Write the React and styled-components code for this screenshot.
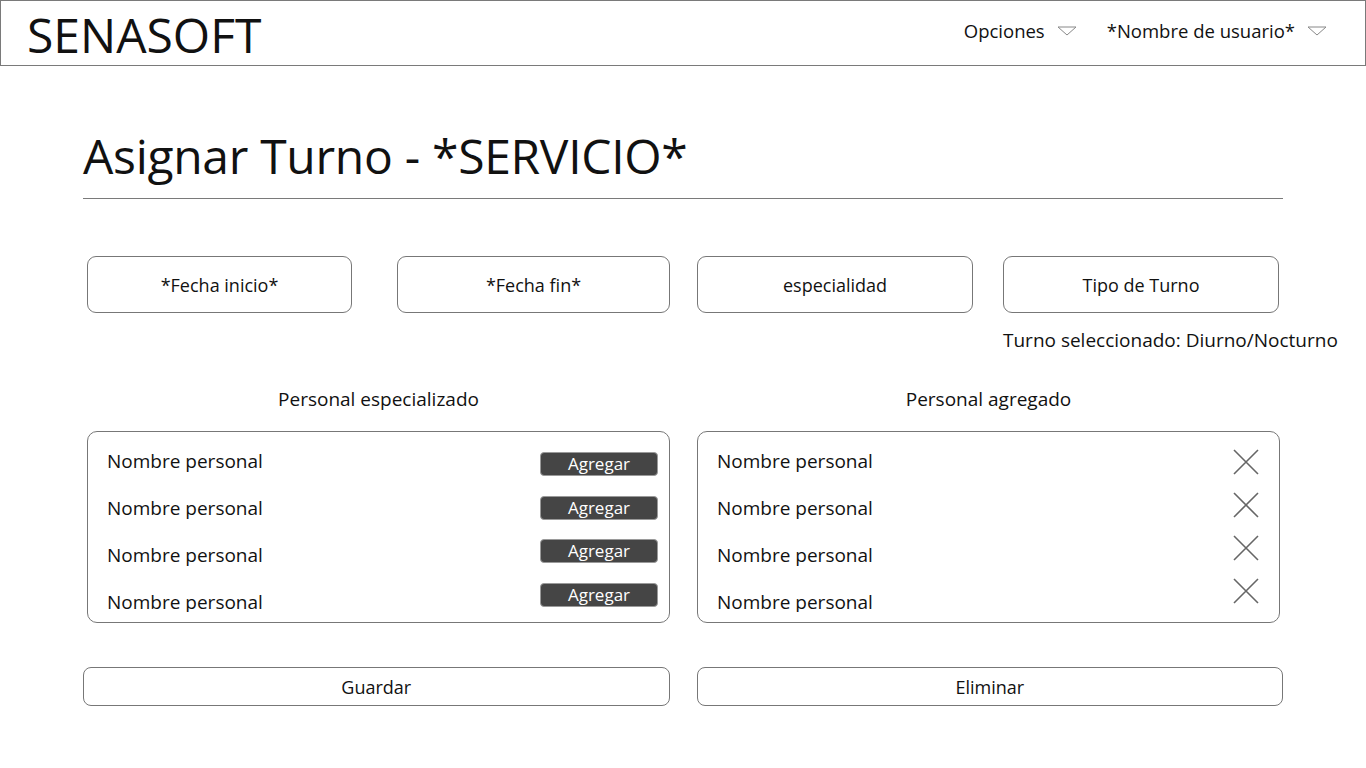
import styled, { createGlobalStyle } from 'styled-components';

const GlobalStyle = createGlobalStyle`
  body {
    margin: 0;
    background: #fff;
    font-family: 'Open Sans', 'Noto Sans', sans-serif;
    color: #111;
  }
`;

const Header = styled.header`
  box-sizing: border-box;
  height: 66px;
  border: 1px solid #7a7a7a;
  display: flex;
  align-items: center;
  justify-content: space-between;
  padding: 0 38px 0 26px;
`;

const Brand = styled.div`
  font-size: 48px;
  line-height: 1;
  margin-top: 4px;
`;

const Nav = styled.nav`
  display: flex;
  align-items: center;
  gap: 30px;
  margin-top: -5px;
`;

const NavItem = styled.div`
  display: flex;
  align-items: center;
  gap: 12px;
  font-size: 18.5px;
`;

const Main = styled.main`
  padding: 0 83px;
`;

const Title = styled.h1`
  margin: 0;
  padding: 57px 0 9px;
  font-size: 48px;
  font-weight: 400;
  line-height: 66px;
  letter-spacing: -0.3px;
  border-bottom: 1px solid #7a7a7a;
`;

const FilterRow = styled.div`
  display: flex;
  margin-top: 57px;
`;

const FilterBox = styled.div`
  box-sizing: border-box;
  width: ${({ w }) => w}px;
  margin-left: ${({ ml }) => ml}px;
  height: 57px;
  border: 1px solid #777;
  border-radius: 9px;
  display: flex;
  align-items: center;
  justify-content: center;
  font-size: 18px;
`;

const Selected = styled.div`
  margin: 14px 0 0 920px;
  font-size: 19px;
  white-space: nowrap;
`;

const Columns = styled.div`
  display: grid;
  grid-template-columns: 583px 583px;
  column-gap: 27px;
  margin: 32px 0 0 4px;
`;

const ColumnLabel = styled.div`
  text-align: center;
  font-size: 19px;
  height: 46px;
  line-height: 28px;
`;

const Panel = styled.div`
  box-sizing: border-box;
  height: 192px;
  border: 1px solid #777;
  border-radius: 10px;
  padding: 15px 11px 10px 19px;
  display: flex;
  justify-content: space-between;
`;

const NameList = styled.div`
  display: flex;
  flex-direction: column;
  gap: 19px;
  overflow: hidden;
`;

const Name = styled.div`
  font-size: 19px;
  line-height: 28px;
  white-space: nowrap;
`;

const ActionList = styled.div`
  display: flex;
  flex-direction: column;
  align-items: center;
  gap: ${({ gap }) => gap}px;
  padding-top: ${({ top }) => top}px;
  padding-right: ${({ right }) => right}px;
`;

const AddButton = styled.button`
  box-sizing: border-box;
  width: 118px;
  height: 24px;
  padding: 0;
  border: 1px solid #9a9a9a;
  border-radius: 4px;
  background: #454545;
  color: #fff;
  font-family: inherit;
  font-size: 17px;
  line-height: 20px;
`;

const RemoveIcon = styled.svg`
  width: 26px;
  height: 26px;
  display: block;
`;

const Actions = styled.div`
  display: flex;
  gap: 27px;
  margin-top: 44px;
`;

const WideButton = styled.button`
  box-sizing: border-box;
  width: 587px;
  height: 39px;
  border: 1px solid #777;
  border-radius: 8px;
  background: #fff;
  color: #111;
  font-family: inherit;
  font-size: 18px;
`;

const Caret = () => (
  <svg width="20" height="10" viewBox="0 0 20 10">
    <path d="M1 1 L10 9 L19 1 Z" fill="none" stroke="#888" strokeWidth="1" />
  </svg>
);

const Cross = () => (
  <RemoveIcon viewBox="0 0 26 26">
    <path d="M1 1 L25 25 M25 1 L1 25" stroke="#666" strokeWidth="1.6" />
  </RemoveIcon>
);

const filters = [
  { label: '*Fecha inicio*', w: 265, ml: 4 },
  { label: '*Fecha fin*', w: 273, ml: 45 },
  { label: 'especialidad', w: 276, ml: 27 },
  { label: 'Tipo de Turno', w: 276, ml: 30 },
];

const people = ['Nombre personal', 'Nombre personal', 'Nombre personal', 'Nombre personal'];

export default function App() {
  return (
    <>
      <GlobalStyle />
      <Header>
        <Brand>SENASOFT</Brand>
        <Nav>
          <NavItem>
            Opciones <Caret />
          </NavItem>
          <NavItem>
            *Nombre de usuario* <Caret />
          </NavItem>
        </Nav>
      </Header>
      <Main>
        <Title>Asignar Turno - *SERVICIO*</Title>
        <FilterRow>
          {filters.map((f) => (
            <FilterBox key={f.label} w={f.w} ml={f.ml}>
              {f.label}
            </FilterBox>
          ))}
        </FilterRow>
        <Selected>Turno seleccionado: Diurno/Nocturno</Selected>
        <Columns>
          <div>
            <ColumnLabel>Personal especializado</ColumnLabel>
            <Panel>
              <NameList>
                {people.map((p, i) => (
                  <Name key={i}>{p}</Name>
                ))}
              </NameList>
              <ActionList gap={19.5} top={5} right={0}>
                {people.map((p, i) => (
                  <AddButton key={i}>Agregar</AddButton>
                ))}
              </ActionList>
            </Panel>
          </div>
          <div>
            <ColumnLabel>Personal agregado</ColumnLabel>
            <Panel>
              <NameList>
                {people.map((p, i) => (
                  <Name key={i}>{p}</Name>
                ))}
              </NameList>
              <ActionList gap={17} top={2} right={9}>
                {people.map((p, i) => (
                  <Cross key={i} />
                ))}
              </ActionList>
            </Panel>
          </div>
        </Columns>
        <Actions>
          <WideButton>Guardar</WideButton>
          <WideButton>Eliminar</WideButton>
        </Actions>
      </Main>
    </>
  );
}
